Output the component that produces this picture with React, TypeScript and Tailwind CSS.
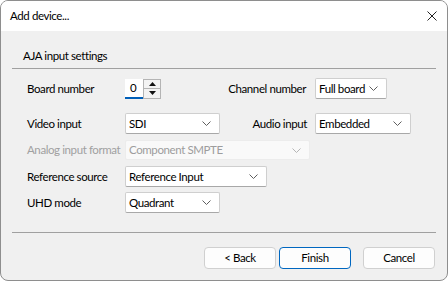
import React from "react";

const font = { fontFamily: 'Lato, "Noto Sans", sans-serif' };

function Chevron({ color = "#5f5f5f" }: { color?: string }) {
  return (
    <svg width="9" height="5" viewBox="0 0 9 5" className="shrink-0">
      <path d="M0.5 0.5 L4.5 4.5 L8.5 0.5" fill="none" stroke={color} strokeWidth="1" />
    </svg>
  );
}

function Combo({ text, w, disabled = false, h = "h-[21px]" }: { text: string; w: string; disabled?: boolean; h?: string }) {
  return (
    <div
      className={`${w} ${h} flex items-center justify-between pl-[3px] pr-[8px] rounded-[2px] border ${
        disabled ? "bg-[#f9f9f9] border-[#ececec] text-[#9d9d9d]" : "bg-white border-[#cfcfcf] border-b-[#a8a8a8] text-black"
      }`}
    >
      <span className="leading-none whitespace-nowrap">{text}</span>
      <Chevron color={disabled ? "#b5b5b5" : "#5f5f5f"} />
    </div>
  );
}

function Spin() {
  return (
    <div className="flex items-stretch h-[20px]">
      <div className="w-[18px] bg-white border-b-2 border-[#005fb8] flex items-center pl-[5px] leading-none">0</div>
      <div className="w-[18px] flex flex-col border border-[#b4b4b4] bg-[#f3f3f3]">
        <div className="flex-1 flex items-center justify-center border-b border-[#b4b4b4]">
          <svg width="7" height="4" viewBox="0 0 7 4"><path d="M3.5 0 L7 4 L0 4 Z" fill="#111" /></svg>
        </div>
        <div className="flex-1 flex items-center justify-center">
          <svg width="7" height="4" viewBox="0 0 7 4"><path d="M0 0 L7 0 L3.5 4 Z" fill="#111" /></svg>
        </div>
      </div>
    </div>
  );
}

function Button({ label, primary = false }: { label: string; primary?: boolean }) {
  return (
    <div
      className={`w-[72px] h-[22px] flex items-center justify-center rounded-[4px] bg-[#fdfdfd] border ${
        primary ? "border-[#0067c0]" : "border-[#d0d0d0]"
      }`}
    >
      {label}
    </div>
  );
}

export default function App() {
  return (
    <div className="w-[448px] h-[281px] text-[11.5px] tracking-[-0.4px] text-black" style={font}>
      <div className="w-full h-full flex flex-col rounded-[8px] border border-[#8e8e8e] overflow-hidden bg-[#f0f0f0]">
        <div className="h-[30px] bg-white flex items-center justify-between pl-[9px] pr-[10px] shrink-0">
          <span className="leading-none">Add device...</span>
          <svg width="10" height="10" viewBox="0 0 10 10">
            <path d="M0.5 0.5 L9.5 9.5 M9.5 0.5 L0.5 9.5" stroke="#222" strokeWidth="1" />
          </svg>
        </div>
        <div className="flex-1 flex flex-col px-[11px]">
          <div className="pt-[19px] pl-[11px] leading-none h-[37px]">AJA input settings</div>
          <div className="h-px bg-[#a0a0a0]" />
          <div className="pl-[15px] flex flex-col">
            <div className="flex items-center h-[21px] mt-[9px]">
              <div className="w-[98px] leading-none">Board number</div>
              <Spin />
              <div className="w-[145px] text-right leading-none">Channel number</div>
              <div className="ml-[9px]">
                <Combo text="Full board" w="w-[72px]" />
              </div>
            </div>
            <div className="flex items-center h-[21px] mt-[14px]">
              <div className="w-[98px] leading-none">Video input</div>
              <Combo text="SDI" w="w-[95px]" />
              <div className="w-[87px] text-right leading-none">Audio input</div>
              <div className="ml-[8px]">
                <Combo text="Embedded" w="w-[96px]" />
              </div>
            </div>
            <div className="flex items-center h-[20px] mt-[6px]">
              <div className="w-[98px] leading-none whitespace-nowrap text-[#a0a0a0]">Analog input format</div>
              <Combo text="Component SMPTE" w="w-[185px]" h="h-[20px]" disabled />
            </div>
            <div className="flex items-center h-[21px] mt-[6px]">
              <div className="w-[98px] leading-none">Reference source</div>
              <Combo text="Reference Input" w="w-[142px]" />
            </div>
            <div className="flex items-center h-[21px] mt-[5px]">
              <div className="w-[98px] leading-none">UHD mode</div>
              <Combo text="Quadrant" w="w-[95px]" />
            </div>
          </div>
          <div className="h-px bg-[#a0a0a0] mt-[19px]" />
          <div className="flex justify-end items-center mt-[14px] pr-px">
            <Button label="< Back" />
            <div className="ml-[3px]">
              <Button label="Finish" primary />
            </div>
            <div className="ml-[12px]">
              <Button label="Cancel" />
            </div>
          </div>
        </div>
      </div>
    </div>
  );
}
